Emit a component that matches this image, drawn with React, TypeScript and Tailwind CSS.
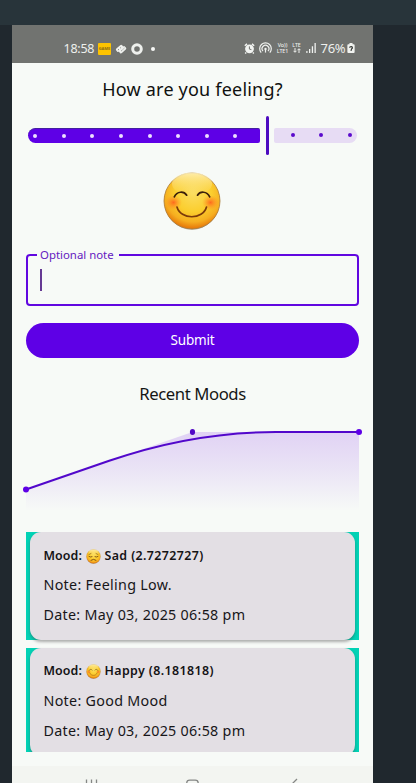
import React from 'react';

function Emoji({ id, sad = false, className }: { id: string; sad?: boolean; className: string }) {
  return (
    <svg viewBox="0 0 60 60" className={className}>
      <defs>
        <radialGradient id={`${id}-face`} cx="0.52" cy="0.36" r="0.66">
          <stop offset="0" stopColor="#fbdd60" />
          <stop offset="0.5" stopColor="#fbce2e" />
          <stop offset="0.78" stopColor="#f6ae20" />
          <stop offset="1" stopColor="#e26a04" />
        </radialGradient>
        <linearGradient id={`${id}-shine`} x1="0" y1="0" x2="0" y2="1">
          <stop offset="0" stopColor="#fff3c4" stopOpacity="0.85" />
          <stop offset="1" stopColor="#fce278" stopOpacity="0" />
        </linearGradient>
        <radialGradient id={`${id}-cheek`}>
          <stop offset="0" stopColor="#ff5a1c" stopOpacity="0.85" />
          <stop offset="1" stopColor="#ff8a20" stopOpacity="0" />
        </radialGradient>
      </defs>
      <ellipse cx="30" cy="31.5" rx="27" ry="27.3" fill="#77736b" opacity="0.55" />
      <circle cx="30" cy="30" r="28" fill={`url(#${id}-face)`} stroke="#a87a36" strokeWidth="0.8" />
      <ellipse cx="30" cy="13" rx="20" ry="11.5" fill={`url(#${id}-shine)`} />
      {sad ? (
        <g fill="none" stroke="#60320c" strokeWidth="3" strokeLinecap="round">
          <path d="M12 30q6 4 12 1M36 31q6 3 12-1M20 45q10-8 20 0" />
          <path d="M12 22l8-4M48 22l-8-4" strokeWidth="2" />
        </g>
      ) : (
        <>
          <ellipse cx="11.5" cy="31.5" rx="8.5" ry="7.5" fill={`url(#${id}-cheek)`} />
          <ellipse cx="48.5" cy="31.5" rx="8.5" ry="7.5" fill={`url(#${id}-cheek)`} />
          <g fill="none" stroke="#3c200b" strokeWidth="1.7" strokeLinecap="round">
            <path d="M12.3 25.8C15 20 22 20 24.7 24.2M35.5 24.2C38 20 45 20 47.7 25.8" />
            <path d="M15 36C18.5 49 41 49 44.5 36" stroke="#7c3a0a" />
          </g>
        </>
      )}
    </svg>
  );
}

function StatusBar() {
  return (
    <header className="flex h-[38px] items-start bg-[#717370] pt-[15px] text-[#eef0ed]">
      <span className="ml-[51.5px] w-[31.5px] whitespace-nowrap text-[12.5px] leading-[18px] tracking-[-0.25px]">18:58</span>
      <span className="ml-[3px] mt-[3px] flex h-3 w-[13px] items-center justify-center rounded-[1px] bg-[#fdc300] text-[4px] font-bold leading-none text-[#8c6d16]">
        GAME
      </span>
      <svg viewBox="0 0 12 12" className="ml-[4px] mt-[3px] size-3">
        <g transform="rotate(-42 6 6)">
          <rect x="1.4" y="2.6" width="8" height="4" rx="1.4" fill="#eef0ed" />
          <rect x="2.6" y="5.6" width="8" height="4" rx="1.4" fill="#eef0ed" />
          <path d="M3 4.8h1.4M6 4.8h1M5 7.6h1.4M8 7.6h1" stroke="#717370" strokeWidth="0.8" />
        </g>
      </svg>
      <svg viewBox="0 0 12 12" className="ml-[4px] mt-[3px] size-3">
        <circle cx="6" cy="6" r="4.3" fill="none" stroke="#eef0ed" strokeWidth="3" />
      </svg>
      <span className="ml-[8px] mt-[7px] size-1 rounded-full bg-[#f7f8f6]" />
      <svg viewBox="0 0 11 11" className="ml-[89px] mt-[3px] size-[11px]">
        <circle cx="5.5" cy="5.8" r="4.4" fill="#f2f4f1" />
        <path d="M0.8 2.8 3 .9M8 .9l2.2 1.9M2.2 9.5l-1 1M8.8 9.5l1 1" stroke="#f2f4f1" strokeWidth="1.4" />
        <path d="M5.4 3.4v2.7l2 .5" fill="none" stroke="#717370" strokeWidth="1" />
      </svg>
      <svg viewBox="0 0 13 12" className="ml-[4px] mt-[2px] h-3 w-[13px]" fill="none" stroke="#f0f2ef" strokeWidth="1.2">
        <path d="M2.2 10.6a5.8 5.8 0 1 1 8.6 0M4 9a3.4 3.4 0 1 1 5 0" />
        <circle cx="6.5" cy="7" r="1.2" fill="#f0f2ef" stroke="none" />
        <path d="M6.5 8v2.6" />
      </svg>
      <span className="ml-[4px] mt-[2px] flex w-[13px] flex-col items-center whitespace-nowrap text-[5.3px] font-medium leading-[6px]">
        <span className="block leading-[6px]">Vo))</span>
        <span className="block leading-[6px]">LTE1</span>
      </span>
      <span className="ml-[2px] mt-[2px] flex w-[11px] flex-col items-center whitespace-nowrap text-[5.3px] font-medium leading-[6px]">
        <span className="block leading-[6px]">LTE</span>
        <svg viewBox="0 0 8 5" className="h-[5px] w-2" fill="none" stroke="#eef0ed" strokeWidth="1">
          <path d="M2 0v4M.5 2.8 2 4.3l1.5-1.5M6 5V1M4.5 2.2 6 .7l1.5 1.5" />
        </svg>
      </span>
      <svg viewBox="0 0 10 10" className="ml-[4px] mt-[3px] size-[10px]" fill="#f0f2ef">
        <path d="M.3 8h1.2v2H.3zM3 6h1.3v4H3zM5.8 3.2h1.3V10H5.8z" />
        <path d="M8.5 0h1.3v10H8.5z" />
      </svg>
      <span className="ml-[4.5px] w-[26px] whitespace-nowrap text-[13px] leading-[17px] tracking-[-0.3px]">76%</span>
      <svg viewBox="0 0 8 11" className="mt-[3px] h-[10px] w-2">
        <path d="M2.3 0h3.4v1.5H7a1 1 0 0 1 1 1V10a1 1 0 0 1-1 1H1a1 1 0 0 1-1-1V2.5a1 1 0 0 1 1-1h1.3z" fill="#f1f3f0" />
        <path d="M2.3 5.2q.3-1.2 1.8-1.2c1.8 0 1.8 1.8.5 2.5L4 8.6" fill="none" stroke="#333633" strokeWidth="1.3" />
      </svg>
    </header>
  );
}

function MoodSlider() {
  return (
    <div className="mx-4 mt-[13px] flex h-[39px] items-center">
      <div className="flex h-[15px] w-[232px] items-center justify-between rounded-l-[7.5px] rounded-r-[2px] border-t border-[#4320a0] bg-[#5e00e6] pl-[5px] pr-[22.5px]">
        {Array.from({ length: 8 }, (_, i) => (
          <span key={i} className="size-1 rounded-full bg-[#eee0ff]" />
        ))}
      </div>
      <div className="ml-[5.5px] h-[39px] w-[3px] rounded-[1.5px] bg-[#4d0bc0]" />
      <div className="ml-[5.5px] flex h-[15px] w-[83px] items-center justify-between rounded-l-[2px] rounded-r-[7.5px] bg-[#e7dcf4] pl-[17px] pr-[5.5px]">
        {Array.from({ length: 3 }, (_, i) => (
          <span key={i} className="size-1 rounded-full bg-[#5b0bcc]" />
        ))}
      </div>
    </div>
  );
}

function MoodChart() {
  return (
    <svg viewBox="0 0 361 90" className="mt-[19px] block h-[90px] w-[361px] shrink-0">
      <defs>
        <linearGradient id="area" gradientUnits="userSpaceOnUse" x1="0" y1="7" x2="0" y2="86">
          <stop offset="0" stopColor="#6a00e8" stopOpacity="0.16" />
          <stop offset="0.45" stopColor="#7010e6" stopOpacity="0.1" />
          <stop offset="1" stopColor="#7010e6" stopOpacity="0" />
        </linearGradient>
      </defs>
      <path d="M14 64.5 180.5 7H347v82H14z" fill="url(#area)" />
      <path d="M14 64.5 97.2 35.8Q180.5 7 263.7 7H347" fill="none" stroke="#5208cb" strokeWidth="2" />
      <circle cx="14" cy="64.5" r="3" fill="#5e00e6" />
      <ellipse cx="180.5" cy="7" rx="2.6" ry="3" fill="#5107c6" />
      <circle cx="347" cy="7" r="3" fill="#5e00e6" />
    </svg>
  );
}

interface Entry {
  id: string;
  mood: string;
  note: string;
  sad?: boolean;
}

function MoodCard({ id, mood, note, sad }: Entry) {
  return (
    <div className="h-[108px] shrink-0 bg-[#02d2b5] px-1">
      <div className="h-[108px] rounded-[11px] bg-[#e3dfe4] px-[13.5px] pt-[14px] shadow-[0_2px_3px_rgba(60,60,60,0.4)]">
        <div className="flex h-5 items-center whitespace-nowrap text-[12.4px] font-semibold tracking-[0.4px] text-[#141315]">
          <span className="w-[42px] tracking-[0.1px]">Mood:</span>
          <Emoji id={id} sad={sad} className="size-[15px]" />
          <span className="ml-[4px]">{mood}</span>
        </div>
        <p className="mt-[8px] h-[22px] whitespace-nowrap text-[14.3px] leading-[21px] tracking-[0.3px] text-[#171619]">Note: {note}</p>
        <p className="mt-[8px] h-[22px] whitespace-nowrap text-[14.3px] leading-[21px] tracking-[0.29px] text-[#171619]">
          Date: May 03, 2025 06:58 pm
        </p>
      </div>
    </div>
  );
}

export default function App() {
  return (
    <div className="h-[783px] w-[416px] overflow-hidden bg-[#20282e] font-['Noto_Sans',sans-serif]">
      <div className="h-[25px] bg-[#28343a]" />
      <main className="ml-3 flex h-[758px] w-[361px] flex-col overflow-hidden bg-[#f7faf7]">
        <StatusBar />
        <h1 className="mt-[13px] h-[27px] whitespace-nowrap text-center text-[18px] leading-[26px] tracking-[0.2px] text-[#101110]">
          How are you feeling?
        </h1>
        <MoodSlider />
        <Emoji id="main" className="ml-[150px] mt-[16.5px] size-[60px] shrink-0" />
        <fieldset className="mx-3.5 mt-[16px] h-[59px] shrink-0 rounded-[4px] border-[2.4px] border-[#6107e0] pl-[9px]">
          <legend className="h-[15px] w-[82px] whitespace-nowrap px-[3px] text-[11.4px] leading-[15px] text-[#6420c0]">
            Optional note
          </legend>
          <div className="ml-[3px] mt-[7px] h-[22px] w-[2px] bg-[#653993]" />
        </fieldset>
        <button className="mx-3.5 mt-[17px] h-[35px] shrink-0 rounded-full bg-[#5e00e6] text-[13.5px] leading-[35px] tracking-[-0.2px] text-white">
          Submit
        </button>
        <h2 className="mt-[23px] h-[25px] shrink-0 whitespace-nowrap text-center text-[16.7px] leading-[25px] tracking-[-0.4px] text-[#151615]">
          Recent Moods
        </h2>
        <MoodChart />
        <section className="mx-3.5 mt-[17px] flex h-[220px] shrink-0 flex-col gap-[7.5px] overflow-hidden">
          <MoodCard id="sad" sad mood="Sad (2.7272727)" note="Feeling Low." />
          <MoodCard id="happy" mood="Happy (8.181818)" note="Good Mood" />
        </section>
        <nav className="mt-[14px] h-[17px] shrink-0 bg-[#f3f5f1]">
          <svg viewBox="0 0 361 17" className="h-[17px] w-[361px]" fill="none" stroke="#858785" strokeWidth="1.3">
            <path d="M74.5 13.5v12M79.5 13.5v12M84.5 13.5v12M285 13l-7 7" />
            <rect x="174.7" y="14.2" width="11.5" height="11" rx="3" />
          </svg>
        </nav>
      </main>
    </div>
  );
}
